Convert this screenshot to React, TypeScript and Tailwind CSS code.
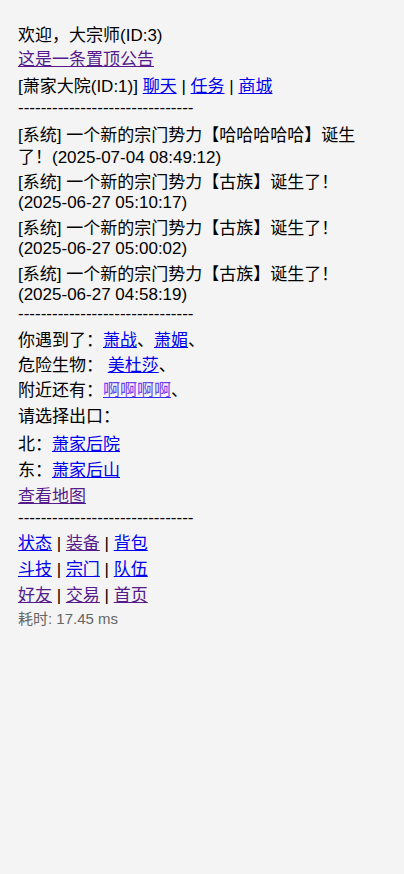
const font = { fontFamily: '"Liberation Sans", "Noto Sans CJK SC", sans-serif' };

// [text, timestamp, extra classes]
const messages: [string, string, string][] = [
    ["[系统] 一个新的宗门势力【哈哈哈哈哈】诞生了！", "(2025-07-04 08:49:12)", "leading-[22px]"],
    ["[系统] 一个新的宗门势力【古族】诞生了！", "(2025-06-27 05:10:17)", "mt-[4px] leading-[20px]"],
    ["[系统] 一个新的宗门势力【古族】诞生了！", "(2025-06-27 05:00:02)", "mt-[6px] leading-[20px]"],
    ["[系统] 一个新的宗门势力【古族】诞生了！", "(2025-06-27 04:58:19)", "mt-[6px] leading-[20px]"],
];

function A({ children, visited = false }: { children: React.ReactNode; visited?: boolean }) {
    return (
        <a href="#" className={`underline ${visited ? "text-[#551a8b]" : "text-[#0000ee]"}`}>
            {children}
        </a>
    );
}

const DASHES = "-------------------------------";

export default function App() {
    return (
        <div className="min-h-[874px] bg-[#f4f4f4] text-black text-[17px]" style={font}>
            <div className="pl-[18px] pr-[18px] pt-[24px] pb-6">
                {/* 顶部 */}
                <div className="leading-[24px]">欢迎，大宗师(ID:3)</div>
                <div className="leading-[24px]">
                    <A visited>这是一条置顶公告</A>
                </div>
                <div className="mt-[2px] leading-[26px]">
                    [萧家大院(ID:1)] <A>聊天</A> | <A>任务</A> | <A>商城</A>
                </div>
                <div className="leading-[15px]">{DASHES}</div>

                {/* 系统消息 */}
                <div className="mt-[10px] flex flex-col">
                    {messages.map(([text, time, cls], i) => (
                        <div key={i} className={cls}>
                            {text}
                            <span className="whitespace-nowrap">{time}</span>
                        </div>
                    ))}
                </div>

                <div className="leading-[18px]">{DASHES}</div>

                {/* 场景 */}
                <div className="mt-[5px] leading-[25px]">
                    <div>
                        你遇到了：<A>萧战</A>、<A>萧媚</A>、
                    </div>
                    <div>
                        危险生物： <A>美杜莎</A>、
                    </div>
                    <div>
                        附近还有：
                        <a href="#" className="underline decoration-[#2a2af0] text-[#6c3ef0]">
                            啊啊啊啊
                        </a>
                        、
                    </div>
                    <div className="mt-[1px]">请选择出口：</div>
                    <div className="mt-[3px] leading-[26px]">
                        北：<A>萧家后院</A>
                    </div>
                    <div className="leading-[26px]">
                        东：<A>萧家后山</A>
                    </div>
                    <div>
                        <A visited>查看地图</A>
                    </div>
                </div>

                <div className="leading-[18px]">{DASHES}</div>

                {/* 菜单 */}
                <div className="mt-[4px] leading-[26px]">
                    <div>
                        <A>状态</A> | <A visited>装备</A> | <A>背包</A>
                    </div>
                    <div>
                        <A>斗技</A> | <A>宗门</A> | <A>队伍</A>
                    </div>
                    <div>
                        <A visited>好友</A> | <A visited>交易</A> | <A visited>首页</A>
                    </div>
                </div>
                <div className="text-[15px] leading-[20px] text-[#666]">耗时: 17.45 ms</div>
            </div>
        </div>
    );
}
